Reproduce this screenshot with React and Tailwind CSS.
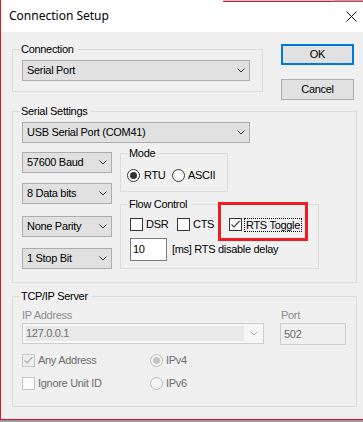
import React from "react";

function Chevron({ color = "#333333" }) {
  return (
    <svg width="8" height="5" viewBox="0 0 8 5" className="shrink-0">
      <polyline points="0.5,0.5 4,4 7.5,0.5" fill="none" stroke={color} strokeWidth="1" />
    </svg>
  );
}

function Combo({ text, className }) {
  return (
    <div className={"flex h-[21px] items-center justify-between border border-[#adadad] bg-[#e1e1e1] pl-[4px] pr-[4px] " + className}>
      <span className="whitespace-nowrap">{text}</span>
      <Chevron />
    </div>
  );
}

function Check({ checked, disabled }) {
  const box = disabled
    ? checked
      ? "border-[#c6c6c6] bg-[#eeeeee]"
      : "border-[#c6c6c6] bg-[#fcfcfc]"
    : "border-[#333333] bg-white";
  return (
    <div className={"flex h-[13px] w-[13px] shrink-0 items-center justify-center border " + box}>
      {checked && (
        <svg width="11" height="11" viewBox="0 0 11 11">
          <polyline points="1.5,5.5 4,8 9.5,2" fill="none" stroke={disabled ? "#a8a8a8" : "#444444"} strokeWidth="1.2" />
        </svg>
      )}
    </div>
  );
}

function Radio({ checked, disabled }) {
  const ring = disabled ? "border-[#bcbcbc] bg-[#f4f4f4]" : "border-[#333333] bg-white";
  return (
    <div className={"flex h-[13px] w-[13px] shrink-0 items-center justify-center rounded-full border " + ring}>
      {checked && <div className={"h-[7px] w-[7px] rounded-full " + (disabled ? "bg-[#c4c4c4]" : "bg-[#333333]")} />}
    </div>
  );
}

function Legend({ children }) {
  return <legend className="ml-[7px] pl-[1px] pr-[4px] leading-[13px] text-black">{children}</legend>;
}

export default function App() {
  return (
    <div className="relative flex h-[422px] w-[363px] flex-col overflow-hidden bg-[#9a9a9a] font-['Liberation_Sans',Arial,sans-serif] text-[11px] tracking-[-0.3px] text-black">
      <div className="flex h-[420px] flex-col border-b border-l border-[#e81123] bg-[#f0f0f0]">
        {/* title bar */}
        <div className="flex h-[32px] flex-col bg-white">
          <div className="flex h-[2px]">
            <div className="flex-1 bg-white" />
            <div className="flex w-[110px] flex-col">
              <div className="h-[1px] bg-[#c9d1e0]" />
              <div className="h-[1px] bg-[#e81123]" />
            </div>
            <div className="flex w-[30px] flex-col">
              <div className="h-[1px] bg-[#a6a6a6]" />
              <div className="h-[1px] bg-[#d04050]" />
            </div>
          </div>
          <div className="flex h-[30px] items-center justify-between pb-[2px] pl-[8px] pr-[6px]">
            <span className="font-['Noto_Sans',sans-serif] text-[12px] tracking-normal">Connection Setup</span>
            <svg width="11" height="11" viewBox="0 0 11 11">
              <path d="M0.5 0.5 L10.5 10.5 M10.5 0.5 L0.5 10.5" stroke="#111" strokeWidth="1" fill="none" />
            </svg>
          </div>
        </div>

        {/* body */}
        <div className="flex flex-col pl-[11px]">
          <div className="flex items-start">
            <fieldset className="mt-[11px] w-[251px] border border-[#dcdcdc] p-0">
              <Legend>Connection</Legend>
              <div className="pb-[10px] pl-[9px] pt-[4px]">
                <Combo text="Serial Port" className="w-[228px]" />
              </div>
            </fieldset>
            <div className="ml-[18px] mt-[12px] flex flex-col">
              <button className="flex h-[21px] w-[73px] items-center justify-center border-2 border-[#0078d7] bg-[#e1e1e1]">OK</button>
              <button className="mt-[14px] flex h-[21px] w-[73px] items-center justify-center border border-[#adadad] bg-[#e1e1e1]">Cancel</button>
            </div>
          </div>

          <fieldset className="mt-[5px] w-[345px] border border-[#dcdcdc] p-0">
            <Legend>Serial Settings</Legend>
            <div className="flex flex-col pb-[13px] pl-[9px] pt-[4px]">
              <Combo text="USB Serial Port (COM41)" className="w-[228px]" />
              <div className="mt-[4px] flex items-start">
                <div className="flex flex-col pt-[5px]">
                  <Combo text="57600 Baud" className="w-[90px]" />
                  <Combo text="8 Data bits" className="mt-[10px] w-[90px]" />
                  <Combo text="None Parity" className="mt-[12px] w-[90px]" />
                  <Combo text="1 Stop Bit" className="mt-[11px] w-[90px]" />
                </div>
                <div className="ml-[8px] flex flex-col">
                  <fieldset className="w-[108px] border border-[#dcdcdc] p-0">
                    <Legend>Mode</Legend>
                    <div className="flex items-center pb-[9px] pl-[6px] pt-[9px] leading-[13px]">
                      <Radio checked />
                      <span className="ml-[4px] w-[28px]">RTU</span>
                      <Radio />
                      <span className="ml-[3px]">ASCII</span>
                    </div>
                  </fieldset>
                  <fieldset className="mt-[6px] w-[199px] border border-[#dcdcdc] p-0">
                    <Legend>Flow Control</Legend>
                    <div className="flex flex-col pb-[7px] pl-[9px] pt-[7px]">
                      <div className="flex h-[13px] items-center leading-[13px]">
                        <Check />
                        <span className="ml-[3px] w-[31px]">DSR</span>
                        <Check />
                        <span className="ml-[3px] w-[36px]">CTS</span>
                        <Check checked />
                        <span className="ml-[2px] border border-dotted border-black px-[1px] leading-[12px]">RTS Toggle</span>
                      </div>
                      <div className="mt-[7px] flex items-center">
                        <div className="flex h-[23px] w-[37px] items-center border border-[#7a7a7a] bg-white pl-[2px]">10</div>
                        <span className="ml-[5px]">[ms] RTS disable delay</span>
                      </div>
                    </div>
                  </fieldset>
                </div>
              </div>
            </div>
          </fieldset>

          <fieldset className="mt-[7px] w-[345px] border border-[#dcdcdc] p-0">
            <Legend>TCP/IP Server</Legend>
            <div className="flex flex-col pb-[16px] pl-[9px] pt-[6px]">
              <div className="flex items-start">
                <div className="flex flex-col">
                  <span className="h-[14px] leading-[13px] text-[#8c8c8c]">IP Address</span>
                  <div className="flex h-[21px] w-[242px] items-center justify-between border border-[#cccccc] bg-[#f7f7f7] p-[2px] pr-[5px]">
                    <div className="flex h-full w-[219px] items-center bg-[#e9e9e9] pl-[1px] text-[#6d6d6d]">127.0.0.1</div>
                    <Chevron color="#b5b5b5" />
                  </div>
                </div>
                <div className="ml-[16px] flex flex-col">
                  <span className="h-[14px] pl-[1px] leading-[13px] text-[#8c8c8c]">Port</span>
                  <div className="flex h-[22px] w-[66px] items-center border border-[#cccccc] bg-[#f0f0f0] pl-[3px] text-[#6d6d6d]">502</div>
                </div>
              </div>
              <div className="mt-[9px] flex h-[13px] items-center leading-[13px] text-[#6d6d6d]">
                <Check checked disabled />
                <span className="ml-[3px] w-[112px]">Any Address</span>
                <Radio checked disabled />
                <span className="ml-[3px]">IPv4</span>
              </div>
              <div className="mt-[10px] flex h-[13px] items-center leading-[13px] text-[#6d6d6d]">
                <Check disabled />
                <span className="ml-[3px] w-[112px]">Ignore Unit ID</span>
                <Radio disabled />
                <span className="ml-[3px]">IPv6</span>
              </div>
            </div>
          </fieldset>
        </div>
      </div>

      {/* annotation highlight */}
      <div className="absolute left-[218px] top-[202px] h-[39px] w-[90px] border-[3px] border-[#ee1d23]" />
    </div>
  );
}
